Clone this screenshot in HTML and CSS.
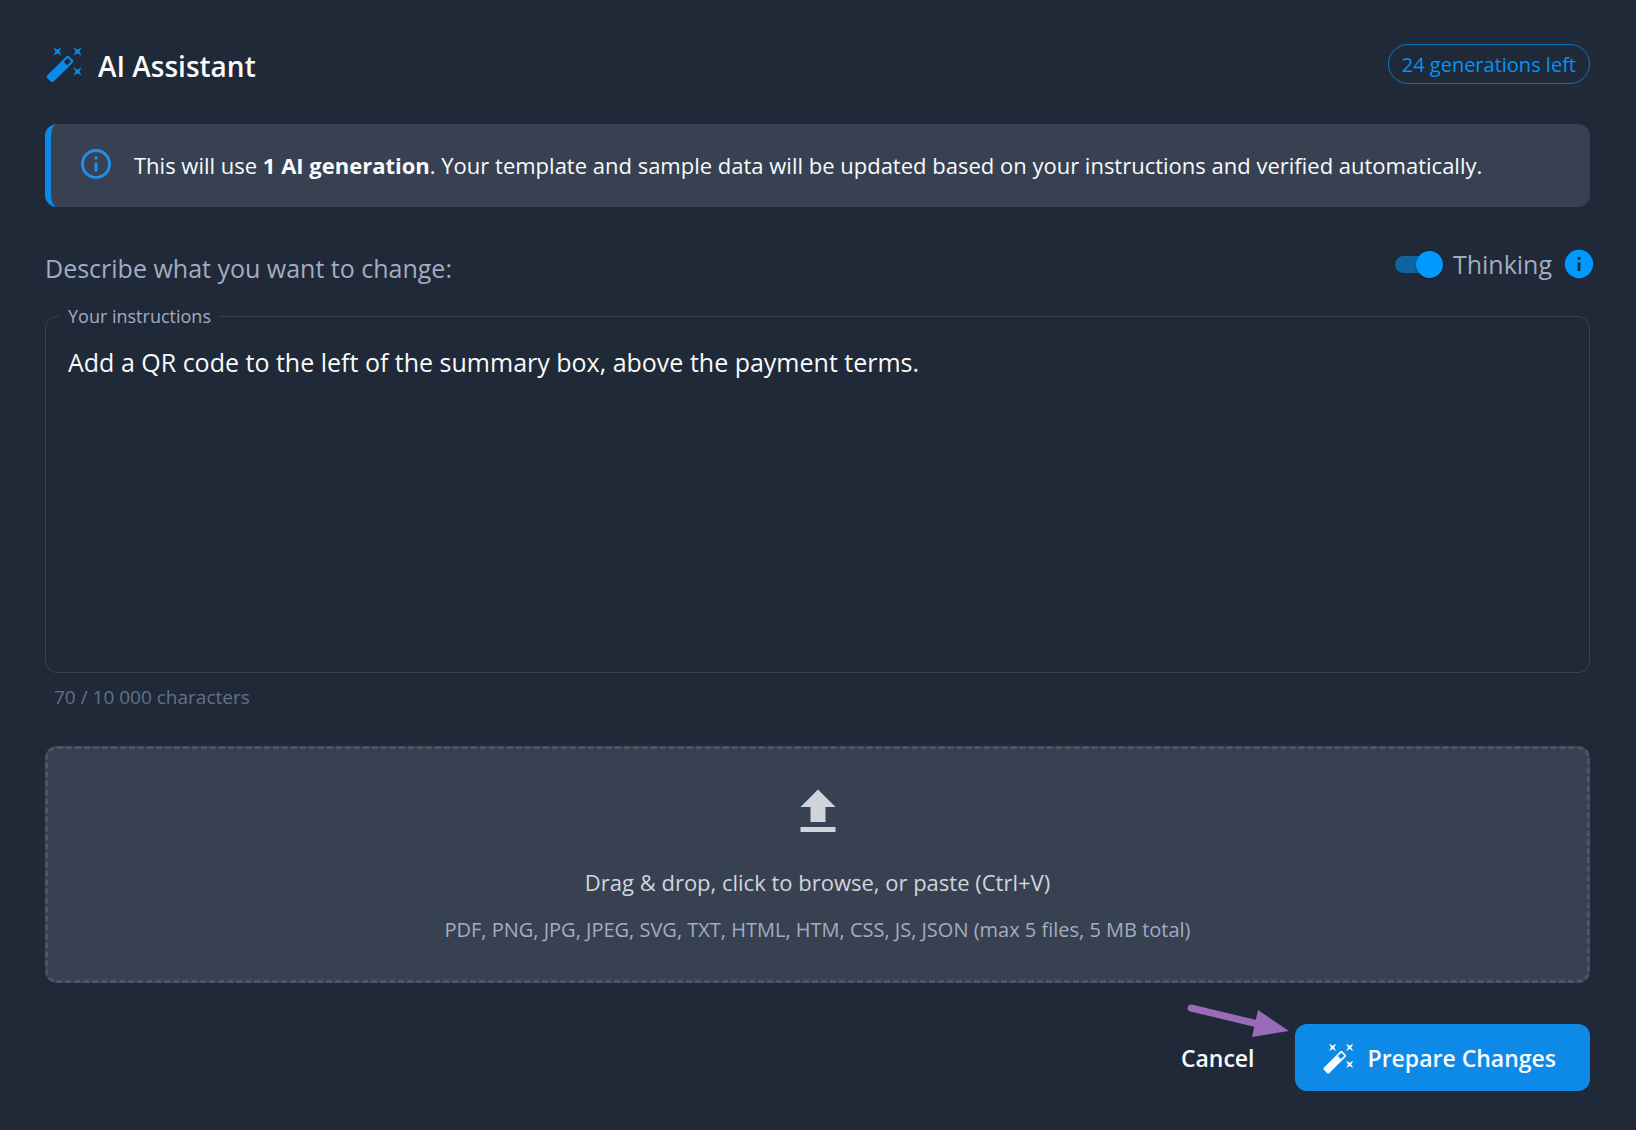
FILE: index.html
```html
<!DOCTYPE html>
<html lang="en">
<head>
  <meta charset="UTF-8">
  <meta name="viewport" content="width=device-width, initial-scale=1.0">
  <title>AI Assistant</title>
  <link rel="stylesheet" href="styles.css">
</head>
<body>
  <!-- shared icon shapes -->
  <svg class="sprite" aria-hidden="true">
    <symbol id="wand" viewBox="0 0 24 24">
      <path d="M7.5 5.6 5 7l1.4-2.5L5 2l2.5 1.4L10 2 8.6 4.5 10 7zM19.5 15.4 22 14l-1.4 2.5L22 19l-2.5-1.4L17 19l1.4-2.5L17 14zM22 2l-1.4 2.5L22 7l-2.5-1.4L17 7l1.4-2.5L17 2l2.5 1.4zM13.34 12.78l2.44-2.44-2.12-2.12-2.44 2.44zM14.37 7.29l2.34 2.34c.39.37.39 1.02 0 1.41L5.04 22.71c-.39.39-1.04.39-1.41 0l-2.34-2.34c-.39-.37-.39-1.02 0-1.41L12.96 7.29c.39-.39 1.04-.39 1.41 0z"/>
    </symbol>
  </svg>

  <main class="dialog">
    <header class="header">
      <svg class="header-icon"><use href="#wand"/></svg>
      <h1>AI Assistant</h1>
      <span class="chip">24 generations left</span>
    </header>

    <div class="notice">
      <svg class="notice-icon" viewBox="0 0 24 24">
        <path d="M11 9h2V7h-2zm1 11c-4.41 0-8-3.59-8-8s3.59-8 8-8 8 3.59 8 8-3.59 8-8 8zm0-18a10 10 0 1 0 0 20 10 10 0 0 0 0-20zm-1 15h2v-6h-2z"/>
      </svg>
      <p>This will use <strong>1 AI generation</strong>. Your template and sample data will be updated based on your instructions and verified automatically.</p>
    </div>

    <div class="prompt-row">
      <p class="prompt">Describe what you want to change:</p>
      <div class="thinking">
        <input type="checkbox" class="switch" id="thinking" checked>
        <label for="thinking">Thinking</label>
        <button type="button" class="info-button" aria-label="About thinking">
          <svg viewBox="0 0 24 24">
            <path d="M12 2a10 10 0 1 0 0 20 10 10 0 0 0 0-20zm1 15h-2v-6h2zm0-8h-2V7h2z"/>
          </svg>
        </button>
      </div>
    </div>

    <fieldset class="field">
      <legend><label for="instructions">Your instructions</label></legend>
      <textarea id="instructions" spellcheck="false">Add a QR code to the left of the summary box, above the payment terms.</textarea>
    </fieldset>
    <p class="counter">70 / 10 000 characters</p>

    <button type="button" class="dropzone">
      <svg class="upload-icon" viewBox="0 0 24 24">
        <path d="M5 20h14v-2H5zM5 10h4v6h6v-6h4l-7-7z"/>
      </svg>
      <span class="drop-title">Drag &amp; drop, click to browse, or paste (Ctrl+V)</span>
      <span class="drop-types">PDF, PNG, JPG, JPEG, SVG, TXT, HTML, HTM, CSS, JS, JSON (max 5 files, 5 MB total)</span>
    </button>

    <footer class="actions">
      <button type="button" class="cancel">Cancel</button>
      <div class="primary-wrap">
        <svg class="arrow" viewBox="0 0 104 36">
          <path class="arrow-line" d="M5 6 72 22"/>
          <path class="arrow-head" d="M72 8 103 29 66 35z"/>
        </svg>
        <button type="button" class="primary">
          <svg class="primary-icon"><use href="#wand"/></svg>
          Prepare Changes
        </button>
      </div>
    </footer>
  </main>
</body>
</html>
```
FILE: styles.css
```css
* {
  box-sizing: border-box;
}

body {
  margin: 0;
  background: #1f2937;
  color: #f9fafb;
  font-family: "Segoe UI", "Open Sans", "Noto Sans", sans-serif;
  font-size: 22px;
}

h1, p {
  margin: 0;
}

button, textarea {
  font-family: inherit;
  color: inherit;
}

button {
  border: none;
  background: none;
  cursor: pointer;
}

svg {
  display: block;
  fill: currentColor;
  flex: none;
}

.sprite {
  position: absolute;
  width: 0;
  height: 0;
}

.dialog {
  padding: 44px 46px 38px 45px;
}

/* Header */
.header {
  display: flex;
  align-items: center;
}

.header-icon {
  width: 40px;
  height: 40px;
  color: #0d8ae8;
}

h1 {
  margin-left: 13px;
  padding-top: 4px;
  font-size: 28px;
  line-height: 36px;
  font-weight: 600;
}

.chip {
  margin-left: auto;
  padding: 1px 13px 0;
  border: 1px solid #1173bb;
  border-radius: 20px;
  color: #0095f8;
  font-size: 20px;
  line-height: 37px;
}

/* Notice */
.notice {
  display: flex;
  align-items: flex-start;
  gap: 20px;
  margin-top: 40px;
  padding: 22px 27px;
  border-left: 6px solid #0d8ae8;
  border-radius: 12px;
  background: #374151;
  line-height: 39px;
}

.notice-icon {
  width: 36px;
  height: 36px;
  color: #238fe8;
}

/* Prompt label and thinking switch */
.prompt-row {
  display: flex;
  justify-content: space-between;
  margin-top: 39px;
  color: #a3acc0;
  font-size: 25px;
}

.prompt {
  margin-top: 4px;
  line-height: 36px;
}

.thinking {
  display: flex;
  align-items: center;
  height: 36px;
  margin-right: -6px;
}

.switch {
  appearance: none;
  position: relative;
  width: 48px;
  height: 27px;
  margin: 0 10px 0 0;
  cursor: pointer;
}

.switch::before {
  content: "";
  position: absolute;
  top: 5px;
  left: 0;
  width: 44px;
  height: 17px;
  border-radius: 9px;
  background: #5b6472;
}

.switch::after {
  content: "";
  position: absolute;
  top: 0;
  left: 0;
  width: 27px;
  height: 27px;
  border-radius: 50%;
  background: #cbd5e1;
  box-shadow: 0 1px 3px rgba(0, 0, 0, 0.3);
}

.switch:checked::before {
  background: #1163a0;
}

.switch:checked::after {
  left: 21px;
  background: #0099ff;
}

.info-button {
  margin-left: 10px;
  padding: 0;
  color: #0099ff;
}

.info-button svg {
  width: 34px;
  height: 34px;
}

/* Instructions */
.field {
  min-width: 0;
  margin: 18px 0 0;
  padding: 0 22px 12px;
  border: 1px solid #374151;
  border-radius: 12px;
}

legend {
  margin-left: -9px;
  padding: 0 9px;
  color: #a3acc0;
  font-size: 18px;
  line-height: 24px;
}

textarea {
  display: block;
  width: 100%;
  height: 332px;
  padding: 16px 0 0;
  border: none;
  outline: none;
  resize: none;
  background: none;
  font-size: 25px;
  line-height: 36px;
}

.counter {
  margin: 12px 0 0 9px;
  color: #64708a;
  font-size: 19px;
  line-height: 24px;
}

/* Upload area */
.dropzone {
  display: flex;
  flex-direction: column;
  align-items: center;
  width: 100%;
  margin-top: 37px;
  padding: 33px 20px 32px;
  border: 3px dashed #4d5564;
  border-radius: 12px;
  background: #374151;
}

.upload-icon {
  width: 60px;
  height: 60px;
  color: #d1d5db;
}

.drop-title {
  margin-top: 22px;
  color: #d1d5db;
  font-size: 22px;
  line-height: 36px;
}

.drop-types {
  margin-top: 12px;
  color: #a3acc0;
  font-size: 20px;
  line-height: 36px;
}

/* Footer buttons */
.actions {
  display: flex;
  justify-content: flex-end;
  gap: 12px;
  margin-top: 41px;
}

.actions button {
  height: 67px;
  border-radius: 12px;
  font-size: 23px;
  font-weight: 600;
}

.cancel {
  padding: 0 28px;
}

.primary-wrap {
  position: relative;
}

.primary {
  display: flex;
  align-items: center;
  gap: 12px;
  padding: 0 34px 0 27px;
  background: #0d8ae8;
}

.primary-icon {
  width: 34px;
  height: 34px;
}

/* Arrow pointing at the primary button */
.arrow {
  position: absolute;
  top: -22px;
  left: -109px;
  width: 104px;
  height: 36px;
  pointer-events: none;
}

.arrow-line {
  fill: none;
  stroke: #996bb9;
  stroke-width: 7;
  stroke-linecap: round;
}

.arrow-head {
  fill: #996bb9;
}
```
